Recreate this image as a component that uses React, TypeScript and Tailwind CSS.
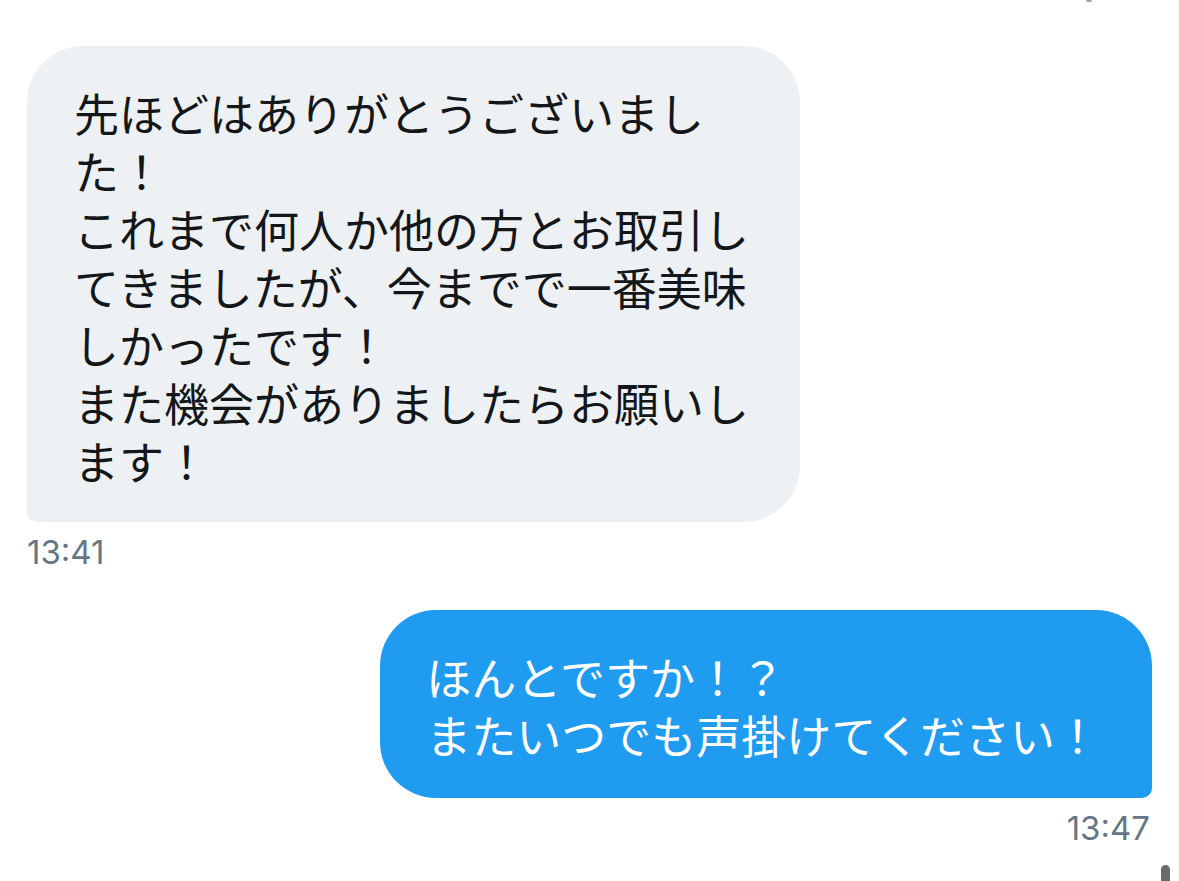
import React from "react";

const jp = { fontFamily: '"Noto Sans CJK JP", "Noto Sans", sans-serif' };
const ts = { fontFamily: 'Inter, "Noto Sans", sans-serif' };

const grayLines = [
  "先ほどはありがとうございまし",
  "た！",
  "これまで何人か他の方とお取引し",
  "てきましたが、今までで一番美味",
  "しかったです！",
  "また機会がありましたらお願いし",
  "ます！",
];

const blueLines = ["ほんとですか！？", "またいつでも声掛けてください！"];

export default function App() {
  return (
    <div className="relative w-[1179px] h-[881px] overflow-hidden bg-white">
      <div className="absolute right-[87px] top-0 w-[6px] h-[2px] rounded-b-full bg-gray-400" />
      <div className="flex flex-col px-[27px] pt-[46px]">
        <div
          className="w-[773px] bg-[#eef1f3] rounded-t-[56px] rounded-br-[56px] rounded-bl-[10px] pl-[47px] pt-[38px] pb-[32px] text-[#14171a] text-[45px] leading-[58px]"
          style={jp}
        >
          {grayLines.map((l, i) => (
            <div key={i} className="whitespace-nowrap">
              {l}
            </div>
          ))}
        </div>
        <div className="mt-[10px] text-[33px] leading-[40px] text-[#657786]" style={ts}>
          13:41
        </div>
        <div
          className="self-end mt-[38px] bg-[#1f9bef] rounded-t-[56px] rounded-bl-[56px] rounded-br-[10px] pl-[46px] pr-[52px] pt-[38px] pb-[34px] text-white text-[45px] leading-[58px]"
          style={jp}
        >
          {blueLines.map((l, i) => (
            <div key={i} className="whitespace-nowrap">
              {l}
            </div>
          ))}
        </div>
        <div className="self-end mt-[10px] mr-[2px] text-[33px] leading-[40px] text-[#657786]" style={ts}>
          13:47
        </div>
      </div>
      <div className="absolute right-[9px] bottom-0 w-[9px] h-[16px] rounded-t-full bg-[#6b6b6b]" />
    </div>
  );
}
